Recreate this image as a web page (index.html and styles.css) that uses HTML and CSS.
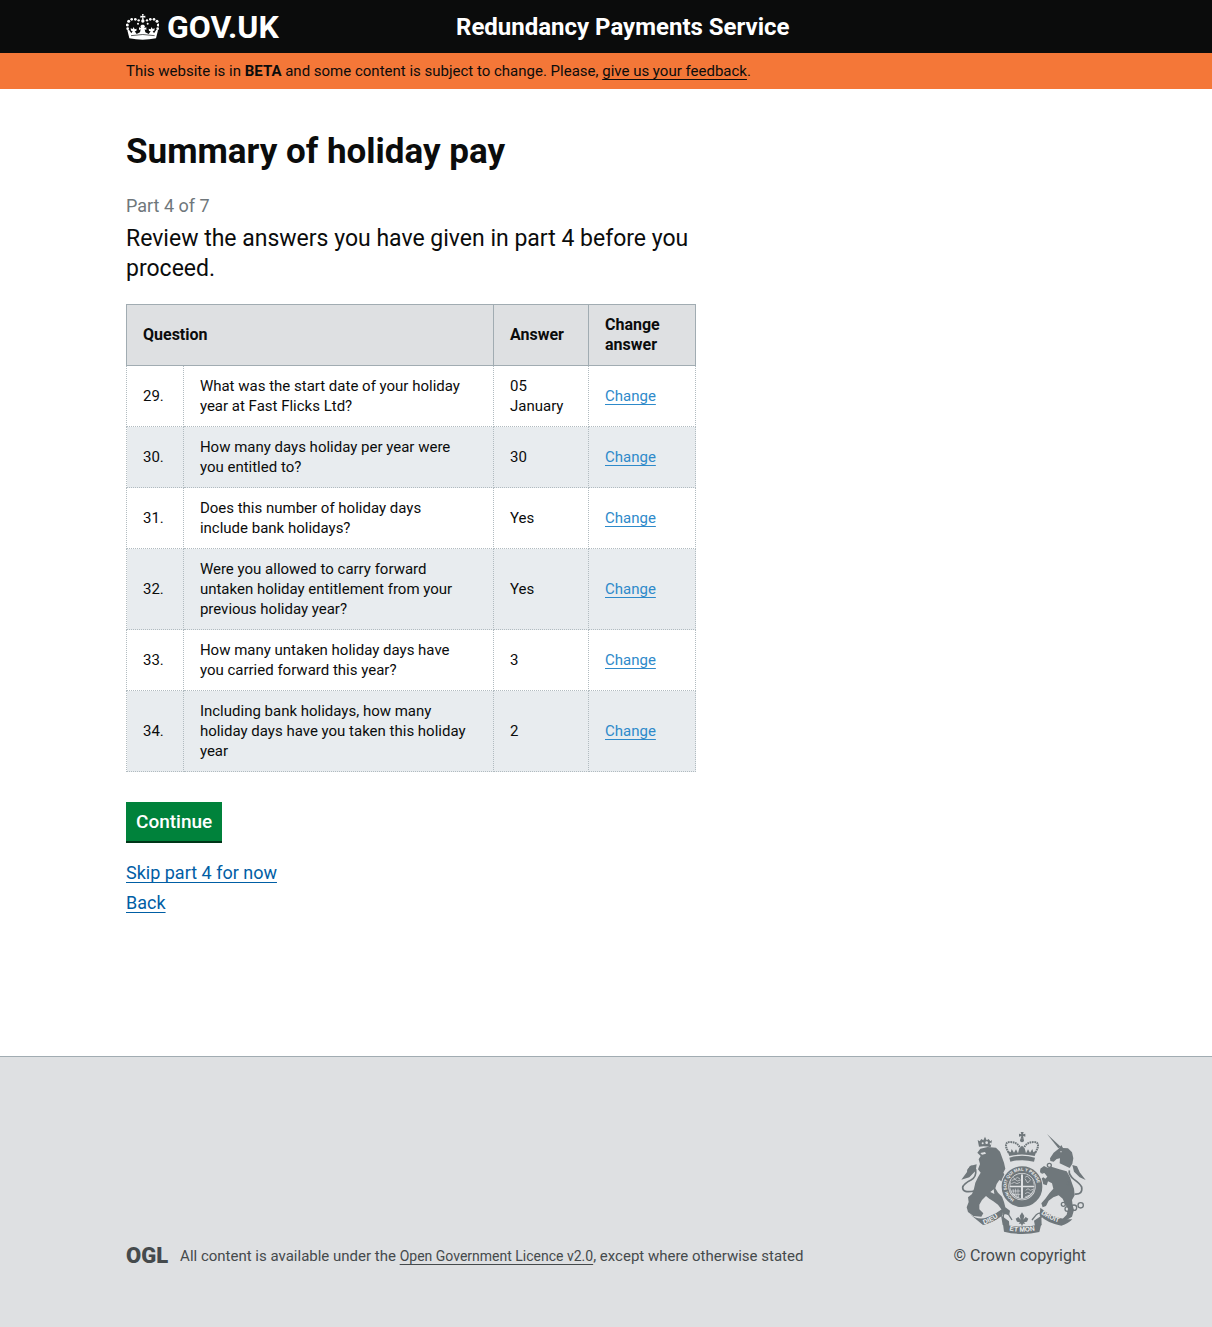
FILE: index.html
```html
<!DOCTYPE html>
<html lang="en">
<head>
<meta charset="utf-8">
<meta name="viewport" content="width=device-width, initial-scale=1">
<title>Summary of holiday pay</title>
<link rel="stylesheet" href="styles.css">
</head>
<body>
<header class="site-header">
  <div class="container header-grid">
    <a class="logo" href="#">
      <svg class="crown" viewBox="32 38 99 78" aria-hidden="true">
        <g fill="#fff">
          <path d="M80 38h5l-1 6 6-1v6l-6-1 1 7h-5l1-7-6 1v-6l6 1z"/>
          <circle cx="82.500" cy="59" r="5"/>
          <circle cx="70" cy="57" r="3.500"/><circle cx="95" cy="57" r="3.500"/>
          <circle cx="60" cy="54" r="4"/><circle cx="105" cy="54" r="4"/>
          <circle cx="49" cy="54" r="4"/><circle cx="116" cy="54" r="4"/>
          <circle cx="40" cy="60" r="4.500"/><circle cx="125" cy="60" r="4.500"/>
          <circle cx="36" cy="71" r="4.500"/><circle cx="129" cy="71" r="4.500"/>
          <circle cx="37" cy="82" r="4"/><circle cx="127" cy="82" r="4"/>
          <circle cx="68" cy="67" r="3"/><circle cx="97" cy="67" r="3"/>
          <path d="M42 111l-6-24 5-2 7 11 4-7-5-1-1-7 6 2 3-6 3 7 6-2-1 7-5 1 6 8 10-5 2-9-5 2v-8l6 2-2-6 4-4h6l4 4-2 6 6-2v8l-5-2 2 9 10 5 6-8-5-1-1-7 6 2 3-7 3 6 6-2-1 7-5 1 4 7 7-11 5 2-6 24q-40 8-80 0z"/>
        </g>
        <path d="M47 103q35-7 71 0" fill="none" stroke="#0b0c0c" stroke-width="2"/>
      </svg>
      <span>GOV.UK</span>
    </a>
    <span class="service-name">Redundancy Payments Service</span>
  </div>
</header>
<div class="beta-banner">
  <p class="container">This website is in <strong>BETA</strong> and some content is subject to change. Please, <a href="#">give us your feedback</a>.</p>
</div>
<main class="container main">
  <div class="content">
    <h1>Summary of holiday pay</h1>
    <p class="part">Part 4 of 7</p>
    <p class="lede">Review the answers you have given in part 4 before you proceed.</p>
    <table class="answers">
      <colgroup><col class="col-number"><col class="col-question"><col class="col-answer"><col class="col-change"></colgroup>
      <thead>
        <tr><th colspan="2" scope="col">Question</th><th scope="col">Answer</th><th scope="col">Change answer</th></tr>
      </thead>
      <tbody>
        <tr><td>29.</td><td class="question">What was the start date of your holiday year at Fast Flicks Ltd?</td><td>05 January</td><td><a href="#">Change</a></td></tr>
        <tr><td>30.</td><td class="question">How many days holiday per year were you entitled to?</td><td>30</td><td><a href="#">Change</a></td></tr>
        <tr><td>31.</td><td class="question">Does this number of holiday days include bank holidays?</td><td>Yes</td><td><a href="#">Change</a></td></tr>
        <tr><td>32.</td><td class="question">Were you allowed to carry forward untaken holiday entitlement from your previous holiday year?</td><td>Yes</td><td><a href="#">Change</a></td></tr>
        <tr><td>33.</td><td class="question">How many untaken holiday days have you carried forward this year?</td><td>3</td><td><a href="#">Change</a></td></tr>
        <tr><td>34.</td><td class="question">Including bank holidays, how many holiday days have you taken this holiday year</td><td>2</td><td><a href="#">Change</a></td></tr>
      </tbody>
    </table>
    <button class="button" type="button">Continue</button>
    <ul class="actions">
      <li><a href="#">Skip part 4 for now</a></li>
      <li><a href="#">Back</a></li>
    </ul>
  </div>
</main>
<footer class="site-footer">
  <div class="container footer-row">
    <div class="licence">
      <span class="ogl">OGL</span>
      <p>All content is available under the <a href="#">Open Government Licence v2.0</a>, except where otherwise stated</p>
    </div>
    <div class="copyright">
      <svg class="arms" viewBox="45 36 375 306" aria-hidden="true">
        <defs>
          <path id="garter" d="M205 238A46 46 0 1 1 251 238"/>
          <path id="dieu" d="M114 313Q145 303 170 280"/>
          <path id="mon" d="M190 331Q228 341 280 328"/>
          <path id="droit" d="M285 281Q312 303 357 311"/>
        </defs>
        <g fill="#6f777b">
          <!-- crown -->
          <path d="M224 36h9l-2 7 7-2v9l-7-2 2 8h-9l2-8-7 2v-9l7 2z"/>
          <circle cx="228" cy="61" r="6"/>
          <path d="M190 108l-6-16 10 5 3-10 7 11 6-10 6 12 4-15 8-8 8 8 4 15 6-12 6 10 7-11 3 10 10-5-6 16q-38-9-76 0z"/>
          <path d="M190 113q38-11 77 0l-3 12q-35-9-71 0z"/>
          <!-- lion -->
          <path d="M99 80l-4-20 6 4 5-7 6 4 5-11 5 11 6-4 5 7 5-4-4 22q-17-6-35-2z"/>
          <path d="M103 86l22-5 25 2 12 12 6 17 6 16 4 18-6 12 6 10 8 10 6 12-6 8-10-2-6-10-10-6-8 12-4 13 8 13 12 12 6 16 4 16 14 10-2 12-18-2-6-14-10-14-14-10-12-8-10-8-12 12-8 14v14l12 12-6 10-24-2-16-12-4-14 6-16-2-14 12-10 6-16 4-18 8-16 8-14-8-10 6-16-4-14 6-10-10-10z"/>
          <!-- unicorn -->
          <path d="M303 42l41 38-7 5z"/>
          <path d="M338 86l8-11 5 9 15 1 12 12 4 18-3 16-8 13-30-14 1-15-10 2-9 8-10-2-1-8 11-17z"/>
          <path d="M283 146l11-8 12 6 10-4 24 8 22 6 10 18 6 18 6 16 2 20-8 14 2 16 4 14-6 20-16 10-12-4 12-12 4-18-10-16-6-14-12-10-16 6-14 10-8 16-10 4-4-12 12-14 12-16 12-14-4-16-12-6-4 12-12-4-6-14 8-6 6 4 6-6-8-10-12-4z"/>
          <!-- ribbons -->
          <path d="M72 283q26 20 54 8 26-10 46-26l-2 21q-29 22-60 28z"/>
          <path d="M102 300q38-9 63-29l3 15q-25 22-55 29z"/>
          <path d="M283 263q32 29 80 35h16q-12 13-33 19-42-7-65-31z"/>
          <path d="M171 313q56 14 115-1l-6 24q-53 12-106-1z"/>
          <path d="M165 286l24 18 1 15-20-4zM267 318l-3-16 22-15 1 29z"/>
        </g>
        <g fill="none" stroke="#6f777b" stroke-width="4">
          <path d="M188 98Q170 67 192 66Q213 66 221 81M268 98Q286 67 264 66Q243 66 235 81" stroke-width="6" stroke-dasharray="5 2"/>
          <path d="M85 213Q50 220 50 203Q51 192 75 180Q92 171 89 149Q79 132 70 145Q60 155 72 157" stroke-width="5"/>
          <path d="M386 222Q411 224 407 201Q401 190 384 178Q367 164 370 151" stroke-width="5"/>
          <circle cx="310" cy="136" r="6"/><circle cx="369" cy="190" r="5"/><circle cx="289" cy="154" r="5"/>
          <circle cx="352" cy="253" r="6"/><circle cx="364" cy="267" r="7"/><circle cx="384" cy="263" r="8"/><circle cx="404" cy="256" r="8"/>
          <path d="M172 294q-2-23 16-10l10 16M285 294q2-23-14-10l-13 16"/>
        </g>
        <g fill="#6f777b">
          <path d="M46 179l17-23 9-18 20-5-3 19-19 20zM419 180l-18-23-8-18-14-4 5 20 17 17z"/>
          <path d="M228 277l7 11-3 11 7-8 8 5-4 9-9 2 4 4h-7l-3 8-3-8h-7l4-4-9-2-4-9 8-5 7 8-3-11z"/>
        </g>
        <!-- garter and shield -->
        <circle cx="228" cy="200" r="64" fill="#dee0e2"/>
        <circle cx="228" cy="200" r="51" fill="none" stroke="#6f777b" stroke-width="20"/>
        <circle cx="228" cy="200" r="38" fill="#dee0e2" stroke="#6f777b" stroke-width="2"/>
        <g fill="#6f777b">
          <path d="M197 175q12-12 28-13v35h-32zM231 202h33q-5 26-33 33z"/>
          <path d="M231 162q18 2 27 13l6 22h-33zM192 202h33v33q-27-7-33-33z"/>
        </g>
        <g fill="none" stroke="#dee0e2" stroke-width="2">
          <path d="M200 172l8 5 6-5 8 5M198 181l9-3 7 5 10-3M196 191l9-4 8 4 9-4M237 172l7-4 10 11-9 10-8-13M239 211l7-5 7 5 8-3M237 221l8-4 9 4M237 231l12-5"/>
          <path d="M201 207q2 17 7 21M208 206q0 17 6 25M216 206q-1 17 2 28M195 213h28M199 223h24"/>
        </g>
        <g class="motto" fill="#f0f1f2">
          <text font-size="13"><textPath href="#garter">HONI SOIT QUI MAL Y PENSE</textPath></text>
          <text font-size="20"><textPath href="#dieu">DIEU</textPath></text>
          <text font-size="20"><textPath href="#mon">ET MON</textPath></text>
          <text font-size="19"><textPath href="#droit">DROIT</textPath></text>
        </g>
        <g fill="#dee0e2">
          <circle cx="110" cy="70" r="3"/><circle cx="122" cy="68" r="4"/><circle cx="134" cy="71" r="3"/>
          <circle cx="345" cy="95" r="2"/>
          <path d="M103 99l14-3 3 5-12 3zM133 216l10-8 2 14z"/>
        </g>
      </svg>
      <a href="#">© Crown copyright</a>
    </div>
  </div>
</footer>
</body>
</html>
```
FILE: styles.css
```css
* { box-sizing: border-box; }

body {
  margin: 0;
  min-height: 100vh;
  display: flex;
  flex-direction: column;
  background: #fff;
  color: #0b0c0c;
  font: 15px/20px Roboto, "Liberation Sans", sans-serif;
}

h1, p, ul { margin: 0; padding: 0; }

a {
  text-decoration: underline;
  text-decoration-thickness: 1px;
  text-underline-offset: 3px;
  text-decoration-skip-ink: none;
}

.container {
  width: calc(100% - 60px);
  max-width: 960px;
  margin: 0 auto;
}

.site-header { background: #0b0c0c; color: #fff; }

.header-grid {
  display: grid;
  grid-template-columns: 330px 1fr;
  align-items: center;
  min-height: 53px;
}

.logo {
  display: flex;
  align-items: center;
  gap: 8px;
  color: #fff;
  font-size: 32px;
  font-weight: 700;
  line-height: 30px;
  text-decoration: none;
}

.crown { width: 33px; height: 26px; }

.service-name { font-size: 24px; font-weight: 700; line-height: 30px; }

.beta-banner { padding: 8px 0; background: #f47738; }
.beta-banner a { color: inherit; }

.main { flex: 1; padding: 43px 0 137px; }
.content { max-width: 570px; }

h1 { font-size: 35px; line-height: 40px; }
.part { margin-top: 21px; color: #6f777b; font-size: 18px; line-height: 25px; }
.lede { margin-top: 6px; font-size: 23px; line-height: 30px; }

.answers {
  width: 100%;
  margin-top: 20px;
  table-layout: fixed;
  border-collapse: collapse;
}

.col-number { width: 10%; }
.col-answer { width: 95px; }
.col-change { width: 107px; }

.answers th, .answers td {
  padding: 10px 16px;
  text-align: left;
  vertical-align: middle;
}

.answers th { border: 1px solid #a1acb2; background: #dee0e2; font-size: 16px; }
.answers td { border: 1px dotted #b1bbc0; }
.answers .question { padding-right: 24px; }
.answers tbody tr:nth-child(even) { background: #e8ecef; }
.answers a { color: #2e8aca; }

.button {
  display: block;
  margin-top: 30px;
  padding: 8px 10px 7px;
  border: 0;
  background: #00823b;
  box-shadow: 0 2px 0 #003618;
  color: #fff;
  font: 500 19px/24px Roboto, "Liberation Sans", sans-serif;
}

.actions {
  margin-top: 17px;
  list-style: none;
  font-size: 18px;
  line-height: 30px;
}
.actions a { color: #005ea5; }

.site-footer {
  padding: 75px 0 61px;
  border-top: 1px solid #a1acb2;
  background: #dee0e2;
  color: #454a4c;
}

.footer-row { display: flex; justify-content: space-between; align-items: flex-end; }
.licence { display: flex; align-items: center; gap: 12px; }
.licence a { color: inherit; font-size: 14px; }
.ogl { font-size: 22px; font-weight: 900; line-height: 20px; }
.copyright { display: flex; flex-direction: column; align-items: flex-end; gap: 12px; }
.copyright a { color: inherit; font-size: 16px; text-decoration: none; }
.arms { width: 125px; height: 102px; }
.motto { font-family: "Liberation Sans", sans-serif; font-weight: 700; }
```
